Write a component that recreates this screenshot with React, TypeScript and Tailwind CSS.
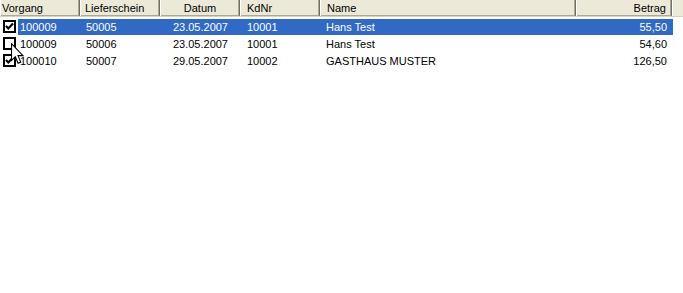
const columns = [
  { title: 'Vorgang', width: 'w-[80px]', align: 'text-left pl-[1px]' },
  { title: 'Lieferschein', width: 'w-[80px]', align: 'text-left pl-[4px]' },
  { title: 'Datum', width: 'w-[80px]', align: 'text-center' },
  { title: 'KdNr', width: 'w-[80px]', align: 'text-left pl-[6px]' },
  { title: 'Name', width: 'w-[256px]', align: 'text-left pl-[6px]' },
  { title: 'Betrag', width: 'w-[96px]', align: 'text-right pr-[5px]' },
];

const rows = [
  { checked: true, vorgang: '100009', lief: '50005', datum: '23.05.2007', kd: '10001', name: 'Hans Test', betrag: '55,50' },
  { checked: false, vorgang: '100009', lief: '50006', datum: '23.05.2007', kd: '10001', name: 'Hans Test', betrag: '54,60' },
  { checked: true, vorgang: '100010', lief: '50007', datum: '29.05.2007', kd: '10002', name: 'GASTHAUS MUSTER', betrag: '126,50' },
];

function CheckBox({ checked }: { checked: boolean }) {
  return (
    <div className="w-[13px] h-[13px] border-2 border-black bg-white flex items-center justify-center">
      {checked && (
        <svg width="9" height="9" viewBox="0 0 9 9">
          <path d="M1 4 L3.3 6.5 L8 1.5" fill="none" stroke="black" strokeWidth="2.2" />
        </svg>
      )}
    </div>
  );
}

function Cursor() {
  return (
    <svg
      className="absolute left-[11px] top-[43px]"
      width="13"
      height="22"
      viewBox="0 0 12 20"
    >
      <path
        d="M0.5 0.5 L0.5 16 L4 12.5 L6.5 18.5 L9 17.5 L6.5 11.5 L11 11.5 Z"
        fill="white"
        stroke="black"
        strokeWidth="1"
      />
    </svg>
  );
}

function App() {
  return (
    <div className="relative w-[683px] h-[293px] bg-white font-['Liberation_Sans',sans-serif] text-[11px] text-black overflow-hidden">
      <div className="flex h-[17px] bg-[#ece9d8] border-b border-[#d6d2c2]">
        {columns.map((c) => (
          <div
            key={c.title}
            className={`${c.width} ${c.align} h-full leading-[16px] border-l border-white border-r border-r-[#716f64] shadow-[inset_-1px_-1px_0_#aca899]`}
          >
            {c.title}
          </div>
        ))}
        <div className="flex-1 h-full border-l border-white" />
      </div>
      <div className="flex flex-col pt-[1px]">
        {rows.map((r, i) => (
          <div key={i} className="flex items-center h-[17px]">
            <div className="w-[18px] flex justify-end pr-[2px]">
              <CheckBox checked={r.checked} />
            </div>
            <div
              className={`flex h-[16px] leading-[16px] ${
                i === 0 ? 'bg-[#316ac5] text-white' : ''
              }`}
            >
              <div className="w-[62px] pl-[2px]">{r.vorgang}</div>
              <div className="w-[80px] pl-[6px]">{r.lief}</div>
              <div className="w-[68px] text-right">{r.datum}</div>
              <div className="w-[12px]" />
              <div className="w-[80px] pl-[7px]">{r.kd}</div>
              <div className="w-[256px] pl-[6px]">{r.name}</div>
              <div className="w-[91px] text-right">{r.betrag}</div>
              <div className="w-[6px]" />
            </div>
          </div>
        ))}
      </div>
      <Cursor />
    </div>
  );
}

export default App;
